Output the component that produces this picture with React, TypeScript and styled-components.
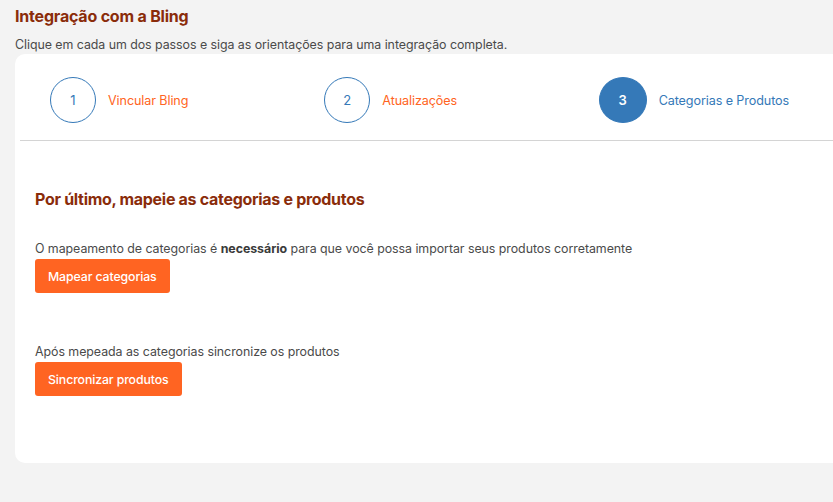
import React from 'react';
import styled, { createGlobalStyle } from 'styled-components';

const GlobalStyle = createGlobalStyle`
  html, body {
    margin: 0;
    padding: 0;
    background: #f3f3f3;
    overflow: hidden;
  }
  body {
    font-family: Inter, "Noto Sans", "Liberation Sans", sans-serif;
    color: #4a4a4a;
  }
`;

const Page = styled.div`
  padding: 6px 0 0 15px;
  height: 502px;
  box-sizing: border-box;
`;

const Title = styled.h1`
  margin: 0;
  font-size: 16px;
  line-height: 20px;
  font-weight: 700;
  color: #8a2c0a;
  letter-spacing: -0.2px;
`;

const Subtitle = styled.p`
  margin: 11px 0 0;
  font-size: 12.4px;
  line-height: 16px;
  letter-spacing: -0.05px;
  color: #4a4a4a;
`;

const Card = styled.section`
  margin: 1px -40px 0 0;
  background: #ffffff;
  border-radius: 10px;
  height: 409px;
  box-sizing: border-box;
`;

const Steps = styled.div`
  display: flex;
  padding: 23px 0 17px 35px;
`;

const Step = styled.div`
  width: 275px;
  display: flex;
  align-items: center;
  gap: 12px;
`;

const Circle = styled.div<{ active: boolean }>`
  width: ${p => (p.active ? 48 : 46)}px;
  height: 46px;
  box-sizing: border-box;
  border-radius: 50%;
  border: 1px solid #3579b8;
  background: ${p => (p.active ? '#3579b8' : '#ffffff')};
  color: ${p => (p.active ? '#ffffff' : '#3579b8')};
  font-size: 13px;
  font-weight: ${p => (p.active ? 600 : 400)};
  display: flex;
  align-items: center;
  justify-content: center;
`;

const StepLabel = styled.span<{ active: boolean }>`
  font-size: 12.6px;
  letter-spacing: -0.1px;
  color: ${p => (p.active ? '#3579b8' : '#ff6422')};
`;

const Divider = styled.hr`
  margin: 0 0 0 5px;
  border: 0;
  border-top: 1px solid #d4d4d4;
`;

const Content = styled.div`
  padding: 48px 0 0 20px;
`;

const Heading = styled.h2`
  margin: 0 0 32px;
  font-size: 16px;
  line-height: 20px;
  font-weight: 700;
  color: #8a2c0a;
  letter-spacing: -0.3px;
`;

const Block = styled.div`
  margin-bottom: 51px;
`;

const Text = styled.p`
  margin: 0 0 2px;
  font-size: 12.4px;
  line-height: 16px;
  letter-spacing: -0.05px;
  color: #4a4a4a;

  strong {
    font-weight: 700;
    color: #3a3a3a;
  }
`;

const Button = styled.button`
  height: 34px;
  padding: 0 13px;
  border: 0;
  border-radius: 3px;
  background: #ff6422;
  color: #ffffff;
  font-family: inherit;
  font-size: 12.3px;
  letter-spacing: -0.1px;
  font-weight: 500;
  cursor: pointer;
`;

const steps = [
  { n: 1, label: 'Vincular Bling' },
  { n: 2, label: 'Atualizações' },
  { n: 3, label: 'Categorias e Produtos' },
];

export default function App() {
  const current = 3;
  return (
    <Page>
      <GlobalStyle />
      <Title>Integração com a Bling</Title>
      <Subtitle>Clique em cada um dos passos e siga as orientações para uma integração completa.</Subtitle>
      <Card>
        <Steps>
          {steps.map(s => (
            <Step key={s.n}>
              <Circle active={s.n === current}>{s.n}</Circle>
              <StepLabel active={s.n === current}>{s.label}</StepLabel>
            </Step>
          ))}
        </Steps>
        <Divider />
        <Content>
          <Heading>Por último, mapeie as categorias e produtos</Heading>
          <Block>
            <Text>
              O mapeamento de categorias é <strong>necessário</strong> para que você possa importar seus produtos corretamente
            </Text>
            <Button>Mapear categorias</Button>
          </Block>
          <Block>
            <Text>Após mepeada as categorias sincronize os produtos</Text>
            <Button>Sincronizar produtos</Button>
          </Block>
        </Content>
      </Card>
    </Page>
  );
}
